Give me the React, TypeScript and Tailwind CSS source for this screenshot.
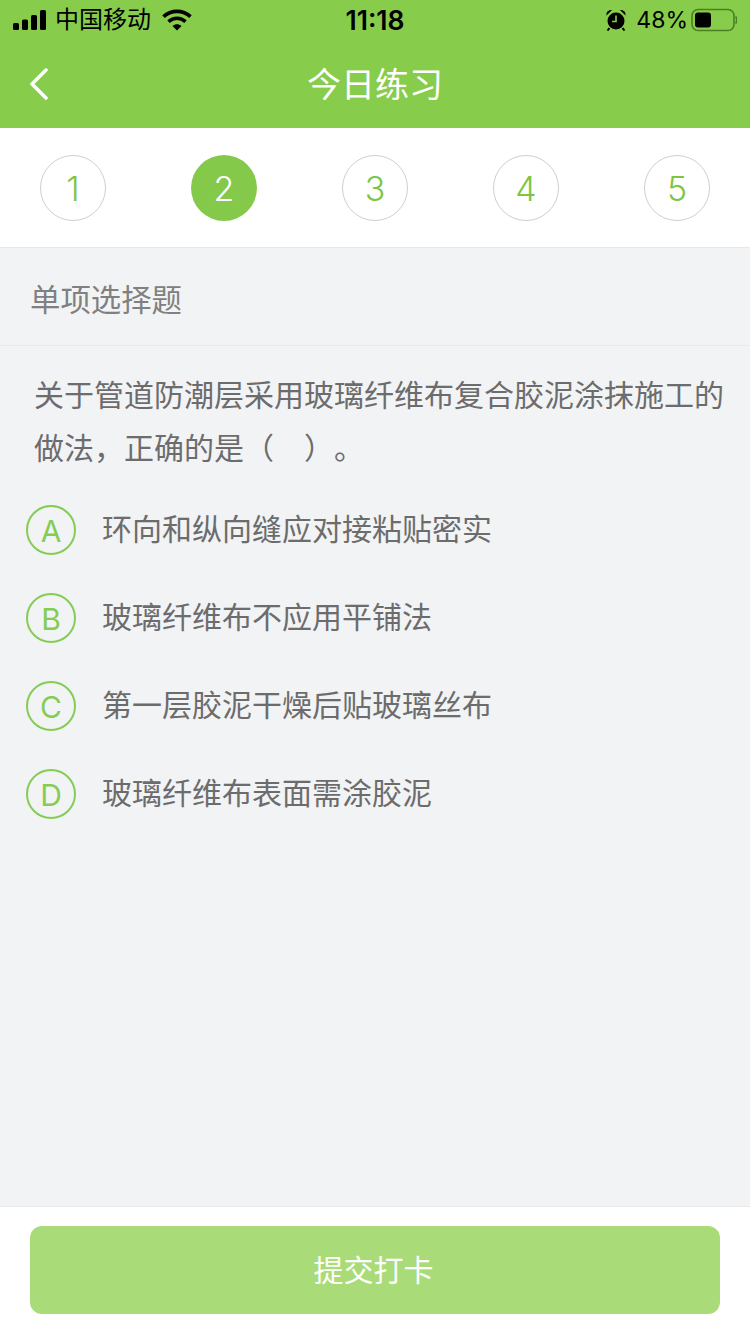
const cjk = "font-['Inter','Noto_Sans_CJK_SC',sans-serif]";

function Signal() {
  return (
    <svg width="34" height="20" viewBox="0 0 34 20" fill="#000">
      <rect x="0" y="13" width="6" height="7" rx="1.5" />
      <rect x="9" y="9.5" width="6" height="10.5" rx="1.5" />
      <rect x="18" y="5" width="6" height="15" rx="1.5" />
      <rect x="27" y="0" width="6" height="20" rx="1.5" />
    </svg>
  );
}

function Wifi() {
  return (
    <svg width="30" height="22" viewBox="0 0 30 22" fill="none" stroke="#000" strokeWidth="3.6">
      <path d="M1.5 7.6C9 .6 21 .6 28.500 7.600" />
      <path d="M6.500 12.600C11.500 8.100 18.500 8.100 23.500 12.600" />
      <path d="M15 21.500 L10.500 17 C13 14.800 17 14.800 19.500 17 Z" fill="#000" stroke="none" />
    </svg>
  );
}

function Alarm() {
  return (
    <svg width="20" height="22" viewBox="0 0 20 22">
      <circle cx="10" cy="12" r="8.500" fill="#000" />
      <path d="M0.500 6.500 C0 3 2.500 0.500 6 1 Z M19.500 6.500 C20 3 17.500 0.500 14 1 Z" fill="#000" />
      <path d="M3.500 19 L1.500 21.500 M16.500 19 L18.500 21.500" stroke="#000" strokeWidth="2" />
      <path d="M10 6.500 V12.500 H6" fill="none" stroke="#87cd4b" strokeWidth="1.600" />
    </svg>
  );
}

function Battery() {
  return (
    <svg width="46" height="24" viewBox="0 0 46 24" fill="none">
      <rect x="1" y="1.500" width="42" height="21" rx="6" stroke="#4c7f25" strokeWidth="1.600" />
      <rect x="4" y="4.500" width="16" height="15" rx="3" fill="#000" />
      <path d="M44.500 8.500 C46 9.500 46 14.500 44.500 15.500" stroke="#4c7f25" strokeWidth="1.600" />
    </svg>
  );
}

function Step({ n, active }: { n: number; active?: boolean }) {
  return (
    <div
      className={
        active
          ? "flex h-[66px] w-[66px] items-center justify-center rounded-full bg-[#85c94a] text-[34px] font-light text-white"
          : "flex h-[66px] w-[66px] items-center justify-center rounded-full border border-[#cfcfcf] text-[34px] font-light text-[#7fc544]"
      }
    >
      {n}
    </div>
  );
}

function Option({ letter, text }: { letter: string; text: string }) {
  return (
    <div className="flex h-[88px] items-center pl-[26px]">
      <div className="mt-[2px] flex h-[50px] w-[50px] items-center justify-center rounded-full border-2 border-[#85cc55] pt-[2px] text-[30px] text-[#85cc55]">
        {letter}
      </div>
      <div className="ml-[26px] text-[30px] text-[#6c6c6c]">{text}</div>
    </div>
  );
}

export default function App() {
  return (
    <div className={`flex h-[1334px] w-[750px] flex-col overflow-hidden bg-[#f2f3f5] ${cjk}`}>
      <header className="h-[128px] shrink-0 bg-[#87cd4b]">
        <div className="flex h-[40px] items-center justify-between pl-[13px] pr-[13px] text-black">
          <div className="flex w-[260px] items-center">
            <Signal />
            <span className="ml-[8px] text-[24px] leading-none">中国移动</span>
            <span className="ml-[11px]"><Wifi /></span>
          </div>
          <div className="text-[26.500px] font-semibold leading-none">11:18</div>
          <div className="flex w-[260px] items-center justify-end">
            <Alarm />
            <span className="ml-[10px] text-[23px] leading-none">48%</span>
            <span className="ml-[3px]"><Battery /></span>
          </div>
        </div>
        <div className="relative flex h-[88px] items-center justify-center pt-[2px]">
          <svg className="absolute left-[29px] top-[28px]" width="20" height="32" viewBox="0 0 20 32" fill="none" stroke="#fff" strokeWidth="3.500" strokeLinecap="round" strokeLinejoin="round">
            <path d="M17 2 L3 16 L17 30" />
          </svg>
          <span className="text-[34px] leading-none text-white">今日练习</span>
        </div>
      </header>

      <section className="flex h-[120px] shrink-0 justify-between border-b border-[#e8e8e8] bg-white px-[40px] pt-[27px]">
        {[1, 2, 3, 4, 5].map((n) => (
          <Step key={n} n={n} active={n === 2} />
        ))}
      </section>

      <div className="flex h-[98px] shrink-0 items-center border-b border-[#e9eaec] pl-[30px] pt-[9px] text-[30.400px] text-[#808080]">
        单项选择题
      </div>

      <p className="mt-[23px] pl-[34px] pr-[25px] text-[30px] leading-[53px] text-[#6c6c6c] [text-spacing-trim:space-all]">
        关于管道防潮层采用玻璃纤维布复合胶泥涂抹施工的做法，正确的是（　）。
      </p>

      <div className="mt-[10px] flex flex-col">
        <Option letter="A" text="环向和纵向缝应对接粘贴密实" />
        <Option letter="B" text="玻璃纤维布不应用平铺法" />
        <Option letter="C" text="第一层胶泥干燥后贴玻璃丝布" />
        <Option letter="D" text="玻璃纤维布表面需涂胶泥" />
      </div>

      <footer className="mt-auto h-[128px] shrink-0 border-t border-[#e8e9eb] bg-white px-[30px] pt-[19px]">
        <button className="flex h-[88px] w-full items-center justify-center rounded-[12px] bg-[#a9dc78] pr-[3px] text-[30px] text-white">
          提交打卡
        </button>
      </footer>
    </div>
  );
}
